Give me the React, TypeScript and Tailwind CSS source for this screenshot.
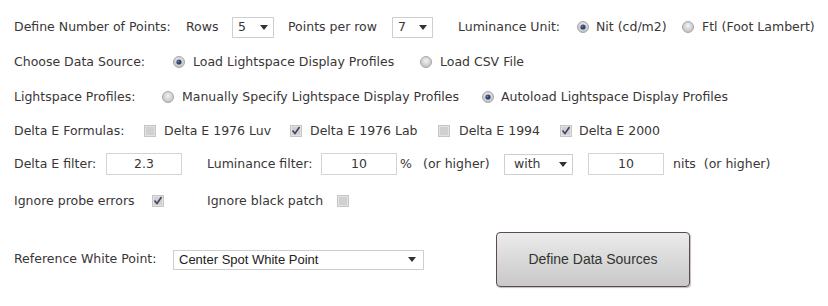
import React from "react";

const font = { fontFamily: "'DejaVu Sans', Verdana, sans-serif" };

function Radio({ checked }: { checked?: boolean }) {
  return (
    <svg width="12" height="12" viewBox="0 0 12 12" className="shrink-0">
      <defs>
        <radialGradient id={checked ? "rg1" : "rg0"} cx="50%" cy="40%" r="60%">
          <stop offset="0%" stopColor="#f4f4f4" />
          <stop offset="100%" stopColor="#bdbdbd" />
        </radialGradient>
      </defs>
      <circle cx="6" cy="6" r="5.5" fill={`url(#${checked ? "rg1" : "rg0"})`} stroke="#a8a8a8" />
      {checked && <circle cx="6" cy="6" r="2.6" fill="#2f4370" />}
      {checked && <circle cx="5.4" cy="5.4" r="0.9" fill="#6d86b8" />}
    </svg>
  );
}

function Check({ checked }: { checked?: boolean }) {
  return (
    <svg width="12" height="12" viewBox="0 0 12 12" className="shrink-0">
      <rect x="0.5" y="0.5" width="11" height="11" fill="#e2e2e2" stroke="#9a9a9a" strokeDasharray="1 1" />
      <rect x="2" y="2" width="8" height="8" fill="#d0d0d0" />
      {checked && <path d="M2.5 5.5 L5 8.5 L9.5 2" fill="none" stroke="#4b3b6b" strokeWidth="1.6" />}
    </svg>
  );
}

function Select({ value, w }: { value: string; w: string }) {
  return (
    <div className={`flex items-center justify-between h-[21px] px-[5px] border border-[#cfcfcf] border-b-dotted bg-white ${w}`}>
      <span>{value}</span>
      <svg width="8" height="5" viewBox="0 0 8 5"><path d="M0 0 H8 L4 5 Z" fill="#333" /></svg>
    </div>
  );
}

function Field({ value, w }: { value: string; w: string }) {
  return (
    <div className={`flex items-center justify-center h-[22px] border border-[#d4d4d4] border-b-dotted bg-white ${w}`}>
      {value}
    </div>
  );
}

export default function App() {
  return (
    <div className="w-[828px] h-[306px] bg-white text-[12.5px] text-[#3a3636] pl-[14px] pt-[15px]" style={font}>
      <div className="flex items-center h-[24px]">
        <span className="w-[172px]">Define Number of Points:</span>
        <span className="w-[46px]">Rows</span>
        <Select value="5" w="w-[42px]" />
        <span className="ml-[14px] w-[104px]">Points per row</span>
        <Select value="7" w="w-[41px]" />
        <span className="ml-[25px] w-[119px]">Luminance Unit:</span>
        <Radio checked />
        <span className="ml-[7px] w-[86px]">Nit (cd/m2)</span>
        <Radio />
        <span className="ml-[8px]">Ftl (Foot Lambert)</span>
      </div>
      <div className="flex items-center h-[24px] mt-[11px]">
        <span className="w-[159px]">Choose Data Source:</span>
        <Radio checked />
        <span className="ml-[8px] w-[227px]">Load Lightspace Display Profiles</span>
        <Radio />
        <span className="ml-[8px]">Load CSV File</span>
      </div>
      <div className="flex items-center h-[24px] mt-[11px]">
        <span className="w-[148px]">Lightspace Profiles:</span>
        <Radio />
        <span className="ml-[8px] w-[300px]">Manually Specify Lightspace Display Profiles</span>
        <Radio checked />
        <span className="ml-[7px]">Autoload Lightspace Display Profiles</span>
      </div>
      <div className="flex items-center h-[24px] mt-[10px]">
        <span className="w-[130px]">Delta E Formulas:</span>
        <Check />
        <span className="ml-[8px] w-[126px]">Delta E 1976 Luv</span>
        <Check checked />
        <span className="ml-[8px] w-[128px]">Delta E 1976 Lab</span>
        <Check />
        <span className="ml-[9px] w-[101px]">Delta E 1994</span>
        <Check checked />
        <span className="ml-[7px]">Delta E 2000</span>
      </div>
      <div className="flex items-center h-[24px] mt-[9px]">
        <span className="w-[92px]">Delta E filter:</span>
        <Field value="2.3" w="w-[76px]" />
        <span className="ml-[25px] w-[114px]">Luminance filter:</span>
        <Field value="10" w="w-[76px]" />
        <span className="ml-[3px] w-[23px]">%</span>
        <span className="w-[81px]">(or higher)</span>
        <Select value="with" w="w-[69px] pl-[9px]" />
        <span className="w-[15px]" />
        <Field value="10" w="w-[76px]" />
        <span className="ml-[9px]">nits&nbsp;&nbsp;(or higher)</span>
      </div>
      <div className="flex items-center h-[24px] mt-[13px]">
        <span className="w-[138px]">Ignore probe errors</span>
        <Check checked />
        <span className="ml-[43px] w-[130px]">Ignore black patch</span>
        <Check />
      </div>
      <div className="flex items-center mt-[19px]">
        <span className="w-[159px]">Reference White Point:</span>
        <div
          className="flex items-center justify-between h-[20px] w-[251px] pl-[5px] pr-[7px] border border-[#cfcfcf] border-b-dotted bg-white text-[13px] text-[#222]"
          style={{ fontFamily: "'Liberation Sans', Arial, sans-serif" }}
        >
          <span>Center Spot White Point</span>
          <svg width="8" height="5" viewBox="0 0 8 5"><path d="M0 0 H8 L4 5 Z" fill="#333" /></svg>
        </div>
        <button
          className="ml-[72px] w-[194px] h-[55px] rounded-[4px] border border-[#5b4b4f] bg-gradient-to-b from-[#ececec] via-[#d9d9d9] to-[#c9c9c9] text-[14px] text-[#333] shadow-[1px_1px_1px_rgba(0,0,0,0.25)]"
          style={{ fontFamily: "'Liberation Sans', Arial, sans-serif" }}
        >
          Define Data Sources
        </button>
      </div>
    </div>
  );
}
